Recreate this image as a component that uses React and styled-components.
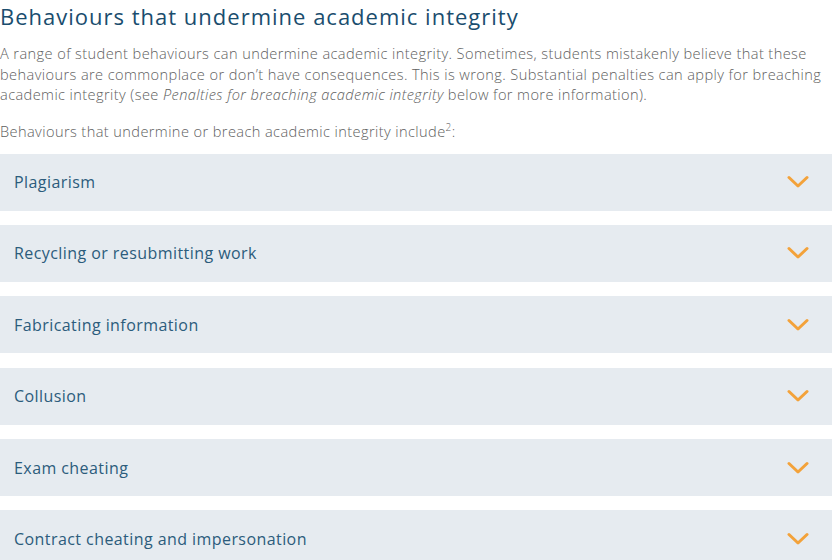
import styled, { createGlobalStyle } from "styled-components";

const GlobalStyle = createGlobalStyle`
  html, body {
    margin: 0;
    padding: 0;
    background: #ffffff;
  }
  body {
    font-family: "Open Sans", Lato, sans-serif;
  }
`;

const items = [
  "Plagiarism",
  "Recycling or resubmitting work",
  "Fabricating information",
  "Collusion",
  "Exam cheating",
  "Contract cheating and impersonation",
];

function Chevron() {
  return (
    <svg width="22" height="14" viewBox="0 0 22 14" fill="none">
      <path
        d="M2 2.5 L11 11 L20 2.5"
        stroke="#f3a23a"
        strokeWidth="3"
        strokeLinecap="round"
        strokeLinejoin="round"
      />
    </svg>
  );
}

function App() {
  return (
    <Page>
      <GlobalStyle />
      <Heading>Behaviours that undermine academic integrity</Heading>
      <Text>
        A range of student behaviours can undermine academic integrity.
        Sometimes, students mistakenly believe that these behaviours are
        commonplace or don’t have consequences. This is wrong. Substantial
        penalties can apply for breaching academic integrity (see{" "}
        <em>Penalties for breaching academic integrity</em> below for more
        information).
      </Text>
      <Lead>
        Behaviours that undermine or breach academic integrity include
        <sup>2</sup>:
      </Lead>
      <List>
        {items.map((label) => (
          <Item key={label}>
            <ItemLabel>{label}</ItemLabel>
            <Chevron />
          </Item>
        ))}
      </List>
    </Page>
  );
}

const Page = styled.div`
  width: 832px;
  height: 560px;
  overflow: hidden;
`;

const Heading = styled.h2`
  margin: 0;
  padding-top: 1px;
  font-size: 22px;
  line-height: 30px;
  font-weight: 400;
  letter-spacing: 1px;
  color: #1a4d6e;
`;

const Text = styled.p`
  margin: 12px 0 0 0;
  font-size: 14.6px;
  line-height: 20.5px;
  font-weight: 300;
  letter-spacing: 0.4px;
  color: #5e5e5e;

  em {
    font-style: italic;
  }
`;

const Lead = styled.p`
  margin: 16px 0 0 0;
  font-size: 14.6px;
  line-height: 20px;
  font-weight: 300;
  letter-spacing: 0.4px;
  color: #5e5e5e;

  sup {
    font-size: 10px;
    line-height: 0;
    vertical-align: 6px;
  }
`;

const List = styled.div`
  margin-top: 13px;
  display: flex;
  flex-direction: column;
  gap: 14.4px;
`;

const Item = styled.div`
  height: 57px;
  flex-shrink: 0;
  background: #e6ebf0;
  display: flex;
  align-items: center;
  justify-content: space-between;
  padding: 0 23px 0 14px;
`;

const ItemLabel = styled.span`
  font-size: 16px;
  letter-spacing: 0.43px;
  color: #2c5c7c;
`;

export default App;
